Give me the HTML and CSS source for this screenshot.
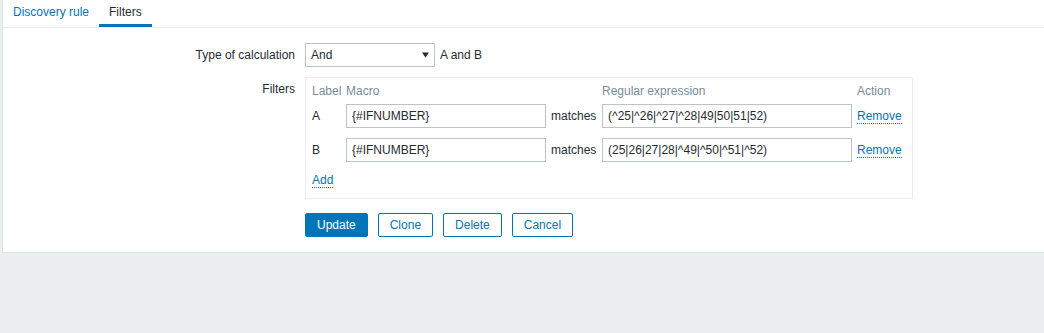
FILE: index.html
```html
<!DOCTYPE html>
<html lang="en">
<head>
<meta charset="utf-8">
<title>Filters</title>
<link rel="stylesheet" href="styles.css">
</head>
<body>
<div class="panel">
  <ul class="tabs">
    <li class="tab"><a href="#">Discovery rule</a></li>
    <li class="tab active">Filters</li>
  </ul>
  <div class="form">
    <div class="form-label">Type of calculation</div>
    <div class="form-field calc">
      <div class="select">
        <span>And</span>
        <svg class="arrow" width="7" height="6" viewBox="0 0 7 6"><polygon points="0,0.5 7,0.5 3.5,5.5" fill="#1f2c33"/></svg>
      </div>
      <span class="formula">A and B</span>
    </div>

    <div class="form-label">Filters</div>
    <div class="form-field">
      <div class="filter-box">
        <div class="frow fhead">
          <span>Label</span><span>Macro</span><span></span><span>Regular expression</span><span>Action</span>
        </div>
        <div class="frow row-a">
          <span>A</span>
          <input class="text" type="text" value="{#IFNUMBER}">
          <span>matches</span>
          <input class="text" type="text" value="(^25|^26|^27|^28|49|50|51|52)">
          <span><a class="link" href="#">Remove</a></span>
        </div>
        <div class="frow row-b">
          <span>B</span>
          <input class="text" type="text" value="{#IFNUMBER}">
          <span>matches</span>
          <input class="text" type="text" value="(25|26|27|28|^49|^50|^51|^52)">
          <span><a class="link" href="#">Remove</a></span>
        </div>
        <div class="add-row"><a class="link" href="#">Add</a></div>
      </div>
    </div>

    <div class="form-field buttons">
      <button class="btn btn-primary">Update</button>
      <button class="btn">Clone</button>
      <button class="btn">Delete</button>
      <button class="btn">Cancel</button>
    </div>
  </div>
</div>
</body>
</html>
```
FILE: styles.css
```css
html, body {
  margin: 0;
  padding: 0;
}
body {
  background: #ebeef0;
  font: 12px "Liberation Sans", Arial, sans-serif;
  color: #1f2c33;
}
.panel {
  margin-left: 2px;
  background: #fff;
  border-left: 1px solid #dfe4e7;
  border-bottom: 1px solid #dfe4e7;
  padding-bottom: 15px;
}
.tabs {
  display: flex;
  margin: 0;
  padding: 0;
  list-style: none;
  height: 27px;
  border-bottom: 1px solid #ebeef0;
}
.tab {
  height: 27px;
  box-sizing: border-box;
  padding: 0 10px;
  line-height: 24px;
}
.tab a {
  color: #0275b8;
  text-decoration: none;
}
.tab.active {
  box-shadow: inset 0 -3px 0 #0275b8;
}
.form {
  display: grid;
  grid-template-columns: 292px auto;
  column-gap: 10px;
  row-gap: 10px;
  justify-content: start;
  padding-top: 15px;
}
.form-label {
  text-align: right;
  line-height: 24px;
}
.calc {
  display: flex;
  align-items: center;
  gap: 5px;
}
.select {
  width: 130px;
  height: 24px;
  box-sizing: border-box;
  border: 1px solid #b9c3c9;
  padding: 0 5px;
  display: flex;
  align-items: center;
  justify-content: space-between;
}
.arrow {
  display: block;
}
.filter-box {
  width: 608px;
  box-sizing: border-box;
  border: 1px solid #ebeef0;
  padding: 1px 6px 6px;
}
.frow {
  display: grid;
  grid-template-columns: 29px 200px 46px 250px auto;
  column-gap: 5px;
  align-items: center;
  height: 24px;
  line-height: 24px;
}
.fhead {
  color: #768d99;
}
.row-a {
  margin-top: 1px;
}
.row-b {
  margin-top: 10px;
}
.add-row {
  margin-top: 6px;
  line-height: 24px;
  height: 24px;
}
.text {
  height: 24px;
  box-sizing: border-box;
  border: 1px solid #b9c3c9;
  border-radius: 0;
  padding: 0 5px;
  margin: 0;
  font: inherit;
  color: #1f2c33;
  background: #fff;
  outline: none;
}
.link {
  color: #0275b8;
  text-decoration: none;
  border-bottom: 1px dotted #0275b8;
}
.buttons {
  grid-column: 2;
  display: flex;
  gap: 10px;
  margin-top: 4px;
}
.btn {
  height: 24px;
  padding: 0 11px;
  border: 1px solid #0275b8;
  border-radius: 2px;
  background: #fff;
  color: #0275b8;
  font: inherit;
  line-height: 22px;
  margin: 0;
}
.btn-primary {
  background: #0275b8;
  color: #fff;
}
```
